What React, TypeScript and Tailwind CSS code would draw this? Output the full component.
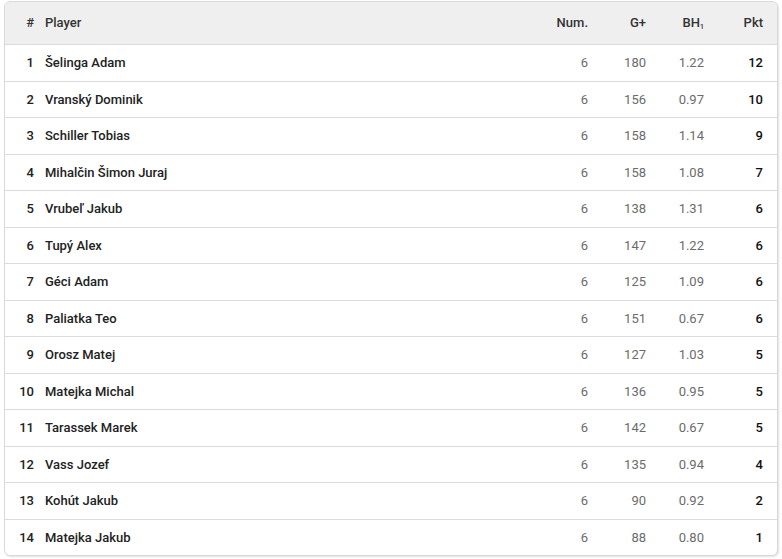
import React from 'react';

type Row = { rank: number; name: string; num: number; g: number; bh: string; pkt: number };

const rows: Row[] = [
  { rank: 1, name: 'Šelinga Adam', num: 6, g: 180, bh: '1.22', pkt: 12 },
  { rank: 2, name: 'Vranský Dominik', num: 6, g: 156, bh: '0.97', pkt: 10 },
  { rank: 3, name: 'Schiller Tobias', num: 6, g: 158, bh: '1.14', pkt: 9 },
  { rank: 4, name: 'Mihalčin Šimon Juraj', num: 6, g: 158, bh: '1.08', pkt: 7 },
  { rank: 5, name: 'Vrubeľ Jakub', num: 6, g: 138, bh: '1.31', pkt: 6 },
  { rank: 6, name: 'Tupý Alex', num: 6, g: 147, bh: '1.22', pkt: 6 },
  { rank: 7, name: 'Géci Adam', num: 6, g: 125, bh: '1.09', pkt: 6 },
  { rank: 8, name: 'Paliatka Teo', num: 6, g: 151, bh: '0.67', pkt: 6 },
  { rank: 9, name: 'Orosz Matej', num: 6, g: 127, bh: '1.03', pkt: 5 },
  { rank: 10, name: 'Matejka Michal', num: 6, g: 136, bh: '0.95', pkt: 5 },
  { rank: 11, name: 'Tarassek Marek', num: 6, g: 142, bh: '0.67', pkt: 5 },
  { rank: 12, name: 'Vass Jozef', num: 6, g: 135, bh: '0.94', pkt: 4 },
  { rank: 13, name: 'Kohút Jakub', num: 6, g: 90, bh: '0.92', pkt: 2 },
  { rank: 14, name: 'Matejka Jakub', num: 6, g: 88, bh: '0.80', pkt: 1 },
];

const grid = 'grid grid-cols-[40px_1fr_58px_58px_58px_59px] items-center pr-[14px]';

export default function App() {
  return (
    <div className="min-h-[559px] w-[782px] bg-white pl-[4px] pt-[1px] font-['Roboto',sans-serif] text-[13px]">
      <div className="w-[774px] overflow-hidden rounded-md border border-[#d9d9d9] bg-white shadow-[1px_1px_2px_rgba(0,0,0,0.12)]">
        <div className={`${grid} h-[42px] bg-[#efefef] font-medium text-[#333]`}>
          <div className="pr-[11px] text-right">#</div>
          <div>Player</div>
          <div className="text-right">Num.</div>
          <div className="text-right">G+</div>
          <div className="text-right">
            BH<sub className="text-[7px]">1</sub>
          </div>
          <div className="text-right">Pkt</div>
        </div>
        {rows.map((r) => (
          <div key={r.rank} className={`${grid} h-[36.5px] border-t border-[#dcdcdc]`}>
            <div className="pr-[11px] text-right font-medium text-[#222]">{r.rank}</div>
            <div className="font-medium text-[#222]">{r.name}</div>
            <div className="text-right text-[#6b6b6b]">{r.num}</div>
            <div className="text-right text-[#6b6b6b]">{r.g}</div>
            <div className="text-right text-[#6b6b6b]">{r.bh}</div>
            <div className="text-right font-medium text-[#111]">{r.pkt}</div>
          </div>
        ))}
      </div>
    </div>
  );
}
